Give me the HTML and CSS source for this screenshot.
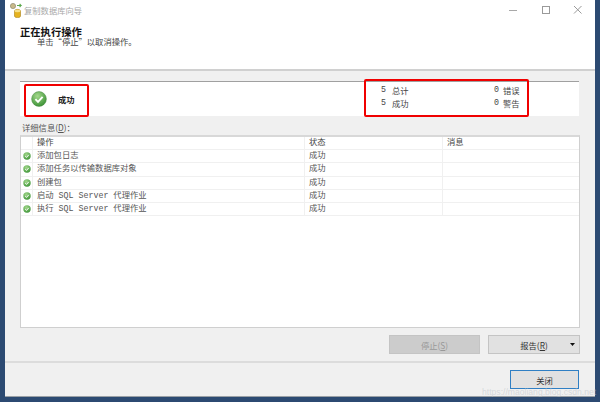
FILE: index.html
```html
<!DOCTYPE html>
<html lang="zh">
<head>
<meta charset="utf-8">
<title>复制数据库向导</title>
<link rel="stylesheet" href="styles.css">
</head>
<body>
<div class="window">
  <div class="header">
    <div class="titlebar">
      <svg class="appicon" width="16" height="16" viewBox="0 0 16 16">
        <circle cx="4" cy="4" r="2.6" fill="#c9b98a" stroke="#8f8a70" stroke-width=".7"/>
        <path d="M8 3.5h4l-1.4-1.6M12 3.5l-1.4 1.6" fill="none" stroke="#5aa84a" stroke-width="1.1"/>
        <path d="M5.5 9c0-1 1.3-1.6 3-1.6s3 .6 3 1.6v5c0 1-1.3 1.6-3 1.6s-3-.6-3-1.6z" fill="#e5b21f" stroke="#a77f16" stroke-width=".6"/>
        <ellipse cx="8.5" cy="9" rx="3" ry="1.3" fill="#f6e08a"/>
      </svg>
      <span class="title">复制数据库向导</span>
      <div class="controls">
        <svg width="10" height="10" viewBox="0 0 10 10"><path d="M0 5.5h8" stroke="#a8a8a8" fill="none"/></svg>
        <svg width="10" height="10" viewBox="0 0 10 10"><rect x="1.5" y="1.5" width="7" height="7" fill="none" stroke="#9a9a9a"/></svg>
        <svg width="10" height="10" viewBox="0 0 10 10"><path d="M1 1l7.5 7.5M8.5 1L1 8.5" stroke="#9a9a9a" fill="none"/></svg>
      </div>
    </div>
    <div class="heading">正在执行操作</div>
    <div class="subheading">单击“停止”以取消操作。</div>
  </div>

  <div class="content">
    <div class="status">
      <div class="status-main">
        <svg class="bigcheck" width="16" height="16" viewBox="0 0 16 16">
          <defs>
            <radialGradient id="bigball" cx=".4" cy=".3" r=".8"><stop offset="0" stop-color="#a5d98c"/><stop offset="1" stop-color="#2f8a2c"/></radialGradient>
          </defs>
          <circle cx="8" cy="8" r="7.4" fill="url(#bigball)" stroke="#4c8b45" stroke-width=".5"/>
          <path d="M4.4 8.2l2.6 2.6 4.6-5" fill="none" stroke="#fff" stroke-width="1.9"/>
        </svg>
        <span class="status-text">成功</span>
      </div>
      <div class="stats">
        <span class="num">5</span><span>总计</span><span class="num">0</span><span>错误</span>
        <span class="num">5</span><span>成功</span><span class="num">0</span><span>警告</span>
      </div>
    </div>

    <div class="label">详细信息(<u>D</u>)：</div>

    <div class="table">
      <div class="row head"><div class="cell icon"></div><div class="cell">操作</div><div class="cell">状态</div><div class="cell">消息</div></div>
      <div class="row"><div class="cell icon"><svg class="tick"><use href="#tick"/></svg></div><div class="cell">添加包日志</div><div class="cell">成功</div><div class="cell"></div></div>
      <div class="row"><div class="cell icon"><svg class="tick"><use href="#tick"/></svg></div><div class="cell">添加任务以传输数据库对象</div><div class="cell">成功</div><div class="cell"></div></div>
      <div class="row"><div class="cell icon"><svg class="tick"><use href="#tick"/></svg></div><div class="cell">创建包</div><div class="cell">成功</div><div class="cell"></div></div>
      <div class="row"><div class="cell icon"><svg class="tick"><use href="#tick"/></svg></div><div class="cell">启动 SQL Server 代理作业</div><div class="cell">成功</div><div class="cell"></div></div>
      <div class="row"><div class="cell icon"><svg class="tick"><use href="#tick"/></svg></div><div class="cell">执行 SQL Server 代理作业</div><div class="cell">成功</div><div class="cell"></div></div>
    </div>

    <div class="actions">
      <div class="btn disabled">停止(<u>S</u>)</div>
      <div class="btn report"><span>报告(<u>R</u>)</span><svg class="caret" width="5" height="3" viewBox="0 0 5 3"><path d="M0 0h5L2.5 3z" fill="#111"/></svg></div>
    </div>
  </div>

  <div class="footer">
    <div class="btn close">关闭</div>
  </div>
</div>

<div class="mark mark-left"></div>
<div class="mark mark-right"></div>
<div class="watermark">https://maoliang.blog.csdn.net</div>

<svg class="defs" width="0" height="0">
  <defs>
    <radialGradient id="ball" cx=".4" cy=".3" r=".8"><stop offset="0" stop-color="#a3d88b"/><stop offset="1" stop-color="#358f30"/></radialGradient>
    <symbol id="tick" viewBox="0 0 8 8">
      <circle cx="4" cy="4" r="3.7" fill="url(#ball)"/>
      <path d="M2.2 4.1l1.3 1.3 2.3-2.6" fill="none" stroke="#fff" stroke-width="1"/>
    </symbol>
  </defs>
</svg>
</body>
</html>
```

FILE: styles.css
```css
* { box-sizing: border-box; }
html, body { margin: 0; height: 402px; overflow: hidden; }
body {
  background: #2c4a72;
  padding: 0 5px 5px;
  font-family: "Noto Sans CJK SC", "Liberation Sans", sans-serif;
  font-size: 8.3px;
  line-height: 12px;
  color: #444;
}
.window {
  height: 397px;
  background: #f0f0f0;
  display: flex;
  flex-direction: column;
  border-bottom: 1px solid #9aa0a6;
}
.header {
  height: 71px;
  flex: none;
  background: #fff;
  border-bottom: 2px solid #d0d0d0;
  padding: 2px 0 0 15px;
}
.titlebar { display: flex; align-items: center; height: 16px; color: #a8a8a8; }
.appicon { margin: 0 -1px 0 -11px; }
.controls { margin-left: auto; margin-right: 12px; display: flex; gap: 22px; }
.heading { margin-top: 9px; font-weight: 700; font-size: 10.3px; line-height: 10px; color: #111; }
.subheading { margin-left: 17px; line-height: 9px; color: #444; }

.content { flex: 1; padding: 10px 15px 0; display: flex; flex-direction: column; }
.status {
  height: 35px;
  flex: none;
  background: #fff;
  border-top: 1px solid #a0a0a0;
  margin-right: 1px;
  display: flex;
  align-items: center;
  justify-content: space-between;
}
.status-main { display: flex; align-items: center; padding-left: 11px; }
.status-text { margin-left: 11px; font-weight: 700; color: #222; }
.stats {
  margin: 0 59px 6px 0;
  display: grid;
  grid-template-columns: 11px 102px 9px 17px;
  row-gap: 1px;
}
.num { font-family: "Liberation Mono", monospace; }

.label { margin-top: 5px; height: 14px; padding-left: 2px; color: #555; }

.table {
  height: 193px;
  flex: none;
  background: #fff;
  border: 1px solid #cfcfcf;
  border-top-width: 2px;
  border-top-color: #d8d8d8;
}
.row {
  display: grid;
  grid-template-columns: 12px 272px 138px 1fr;
  height: 13.2px;
  border-bottom: 1px solid #f0f0f0;
}
.cell {
  border-right: 1px solid #f0f0f0;
  padding-left: 4px;
  white-space: pre;
  color: #555;
  font-family: "Liberation Mono", "Noto Sans CJK SC", monospace;
  font-size: 8.3px;
  overflow: hidden;
}
.cell:last-child { border-right: 0; }
.cell.icon { padding: 2px 0 0 2px; }
.head .cell { color: #444; }
.tick { display: block; width: 8px; height: 8px; }

.actions { margin-top: 7px; display: flex; justify-content: flex-end; gap: 8px; }
.btn {
  height: 19px;
  display: flex;
  align-items: center;
  justify-content: center;
  background: #e1e1e1;
  border: 1px solid #c4c4c4;
  color: #333;
}
.disabled { width: 91px; background: #cccccc; color: #999; }
.report { width: 92px; position: relative; }
.caret { position: absolute; right: 4px; top: 7px; }

.footer {
  height: 35px;
  flex: none;
  border-top: 2px solid #dcdcdc;
  padding: 7px 16px 0 0;
  display: flex;
  justify-content: flex-end;
  align-items: flex-start;
}
.close { width: 69px; border: 1px solid #2f7fc4; box-shadow: inset 0 0 0 1px #e1e1e1; }

.mark {
  position: absolute;
  top: 84px;
  height: 33px;
  border: 2px solid #f00000;
  border-radius: 2px;
}
.mark-left { left: 24px; width: 65px; }
.mark-right { left: 364px; width: 165px; top: 79px; height: 38px; }
.watermark {
  position: absolute;
  left: 482px;
  top: 387px;
  font-family: "Liberation Sans", sans-serif;
  font-size: 8.6px;
  line-height: 11px;
  color: rgba(190,195,200,.55);
}
.defs { position: absolute; }
```
